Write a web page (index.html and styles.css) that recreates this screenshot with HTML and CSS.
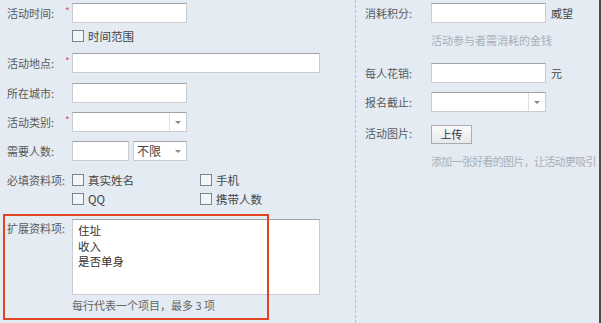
FILE: index.html
```html
<!DOCTYPE html>
<html lang="zh-CN">
<head>
<meta charset="utf-8">
<title>活动表单</title>
<link rel="stylesheet" href="styles.css">
</head>
<body>
<div class="page">
  <div class="col-left">
    <div class="row r-time">
      <span class="lbl">活动时间:</span><span class="req">*</span>
      <div class="input w115"></div>
    </div>
    <div class="row r-range">
      <label class="chk"><span class="box"></span>时间范围</label>
    </div>
    <div class="row r-place">
      <span class="lbl">活动地点:</span><span class="req">*</span>
      <div class="input w248"></div>
    </div>
    <div class="row r-city">
      <span class="lbl">所在城市:</span><span class="req"></span>
      <div class="input w115"></div>
    </div>
    <div class="row r-type">
      <span class="lbl">活动类别:</span><span class="req">*</span>
      <div class="input select w115"><span class="val"></span><span class="arrow"></span></div>
    </div>
    <div class="row r-num">
      <span class="lbl">需要人数:</span><span class="req"></span>
      <div class="input w57"></div>
      <div class="input select w54"><span class="val">不限</span><span class="arrow plain"></span></div>
    </div>
    <div class="row r-must">
      <span class="lbl">必填资料项:</span><span class="req"></span>
      <div class="chkgrid">
        <label class="chk"><span class="box"></span>真实姓名</label>
        <label class="chk"><span class="box"></span>手机</label>
        <label class="chk"><span class="box"></span>QQ</label>
        <label class="chk"><span class="box"></span>携带人数</label>
      </div>
    </div>
    <div class="row r-ext">
      <span class="lbl">扩展资料项:</span><span class="req"></span>
      <div class="field">
        <div class="textarea">住址<br>收入<br>是否单身</div>
        <div class="tip dark">每行代表一个项目，最多 3 项</div>
      </div>
    </div>
  </div>
  <div class="col-right">
    <div class="row r-cost">
      <span class="lbl2">消耗积分:</span>
      <div class="input w115"></div><span class="unit">威望</span>
    </div>
    <div class="row tip r-cost-tip">活动参与者需消耗的金钱</div>
    <div class="row r-spend">
      <span class="lbl2">每人花销:</span>
      <div class="input w115"></div><span class="unit">元</span>
    </div>
    <div class="row r-deadline">
      <span class="lbl2">报名截止:</span>
      <div class="input select w115"><span class="val"></span><span class="arrow"></span></div>
    </div>
    <div class="row r-pic">
      <span class="lbl2">活动图片:</span>
      <button class="btn" type="button">上传</button>
    </div>
    <div class="row tip r-pic-tip">添加一张好看的图片，让活动更吸引</div>
  </div>
  <div class="highlight"></div>
</div>
</body>
</html>
```

FILE: styles.css
```css
html, body {
  margin: 0;
  padding: 0;
}
body {
  background: #e4ebf2;
  font-family: "Noto Sans CJK SC", "Liberation Sans", sans-serif;
  font-size: 11px;
  color: #555;
}
.page {
  position: relative;
  display: flex;
  width: 599px;
  height: 323px;
  border-right: 2px solid #4d4d4d;
  overflow: hidden;
  white-space: nowrap;
}
.col-left {
  width: 355px;
  flex: none;
  display: flex;
  flex-direction: column;
  padding-left: 7px;
  box-sizing: border-box;
}
.col-right {
  flex: 1;
  min-width: 0;
  border-left: 1px dashed #b9c0c8;
  display: flex;
  flex-direction: column;
  padding-left: 9px;
  overflow: hidden;
}
.row {
  display: flex;
  align-items: center;
  height: 20px;
  line-height: 14px;
}
.lbl {
  width: 58px;
  flex: none;
  color: #5a5a5a;
}
.lbl2 {
  width: 66px;
  flex: none;
  color: #5a5a5a;
}
.req {
  width: 7px;
  flex: none;
  align-self: flex-start;
  color: #e0506a;
  font-size: 10px;
  line-height: 12px;
  margin-top: 2px;
}
.input {
  height: 20px;
  box-sizing: border-box;
  background: #fff;
  border: 1px solid #c9cdd2;
  border-top-color: #9fa3a8;
  flex: none;
}
.w115 { width: 115px; }
.w248 { width: 248px; }
.w57 { width: 57px; }
.w54 { width: 54px; margin-left: 4px; }
.select {
  display: flex;
  align-items: center;
}
.select .val {
  flex: 1;
  padding-left: 3px;
  color: #444;
  font-size: 12px;
}
.select .arrow {
  width: 16px;
  height: 18px;
  border-left: 1px solid #dde0e3;
  position: relative;
  flex: none;
}
.select .arrow.plain {
  border-left: none;
}
.select .arrow::after {
  content: "";
  position: absolute;
  left: 5px;
  top: 8px;
  border-left: 3px solid transparent;
  border-right: 3px solid transparent;
  border-top: 3px solid #888;
}
.r-time { margin-top: 3px; }
.r-range { margin-top: 6px; height: 14px; padding-left: 65px; }
.r-place { margin-top: 10px; }
.r-city { margin-top: 10px; }
.r-type { margin-top: 9px; }
.r-num { margin-top: 9px; }
.r-must { margin-top: 12px; align-items: flex-start; height: auto; }
.chkgrid {
  display: grid;
  grid-template-columns: 128px 120px;
  row-gap: 5px;
}
.chk {
  display: flex;
  align-items: center;
  height: 14px;
  color: #444;
  font-size: 11.5px;
}
.box {
  width: 10px;
  height: 10px;
  border: 1px solid #7c8590;
  background: #f3f6f9;
  margin-right: 4px;
  flex: none;
}
.r-ext {
  margin-top: 13px;
  height: auto;
  align-items: flex-start;
}
.r-ext .lbl { margin-top: 2px; }
.field {
  display: flex;
  flex-direction: column;
}
.textarea {
  width: 248px;
  height: 76px;
  box-sizing: border-box;
  background: #fff;
  border: 1px solid #c9cdd2;
  border-top-color: #9fa3a8;
  padding: 3px 0 0 5px;
  line-height: 15.5px;
  color: #333;
  font-size: 11.5px;
}
.tip {
  color: #a9b0b8;
}
.tip.dark {
  color: #666;
  margin-top: 3px;
  line-height: 14px;
}
.unit {
  margin-left: 5px;
  color: #444;
}
.r-cost { margin-top: 3px; }
.r-cost-tip { margin-top: 10px; height: 14px; padding-left: 66px; }
.r-spend { margin-top: 16px; }
.r-deadline { margin-top: 9px; }
.r-pic { margin-top: 11px; }
.btn {
  width: 41px;
  height: 19px;
  box-sizing: border-box;
  border: 1px solid #a9adb2;
  background: linear-gradient(#fbfbfb, #e6e8ea);
  font-family: inherit;
  font-size: 11px;
  color: #333;
  padding: 0;
  line-height: 16px;
  margin-top: 2px;
}
.r-pic-tip { margin-top: 11px; height: 14px; padding-left: 66px; letter-spacing: -0.7px; }
.highlight {
  position: absolute;
  left: 3px;
  top: 214px;
  width: 262px;
  height: 102px;
  border: 2px solid #e2421f;
}
```
